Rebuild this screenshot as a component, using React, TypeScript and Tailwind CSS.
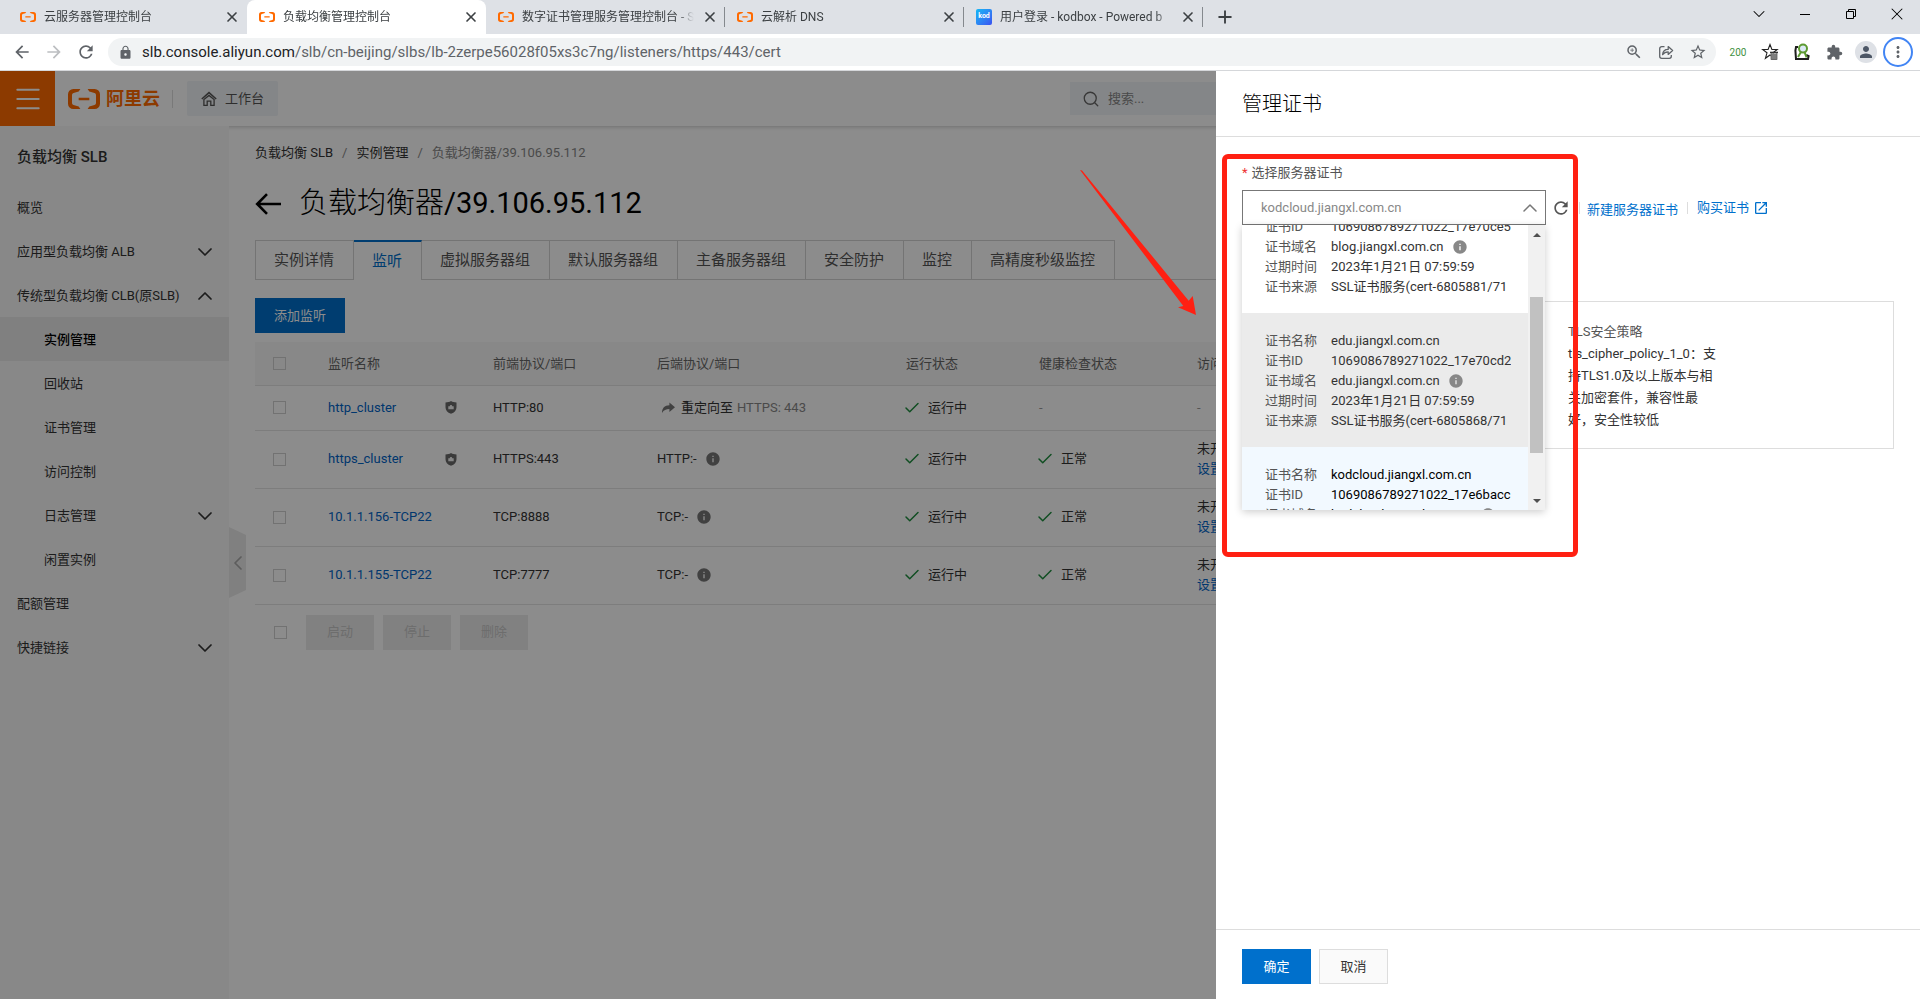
import React from "react";
import {
  ChevronDown,
  ChevronLeft,
  ChevronUp,
  Check,
  Menu,
  Plus,
  Search,
  X,
} from "lucide-react";
import {
  MdArrowBack,
  MdArrowForward,
  MdExtension,
  MdInfo,
  MdLock,
  MdMoreVert,
  MdOpenInNew,
  MdPerson,
  MdRefresh,
  MdStarBorder,
  MdZoomIn,
} from "react-icons/md";
import { SiAlibabacloud } from "react-icons/si";

interface BrowserTab {
  title: string;
  active?: boolean;
  kod?: boolean;
  divider?: boolean;
}

const browserTabs: BrowserTab[] = [
  { title: "云服务器管理控制台" },
  { title: "负载均衡管理控制台", active: true },
  { title: "数字证书管理服务管理控制台 - S", divider: true },
  { title: "云解析 DNS", divider: true },
  { title: "用户登录 - kodbox - Powered b", kod: true, divider: true },
];

interface NavItem {
  label: string;
  sub?: boolean;
  active?: boolean;
  arrow?: "up" | "down";
}

const navItems: NavItem[] = [
  { label: "概览" },
  { label: "应用型负载均衡 ALB", arrow: "down" },
  { label: "传统型负载均衡 CLB(原SLB)", arrow: "up" },
  { label: "实例管理", sub: true, active: true },
  { label: "回收站", sub: true },
  { label: "证书管理", sub: true },
  { label: "访问控制", sub: true },
  { label: "日志管理", sub: true, arrow: "down" },
  { label: "闲置实例", sub: true },
  { label: "配额管理" },
  { label: "快捷链接", arrow: "down" },
];

const detailTabs = [
  "实例详情",
  "监听",
  "虚拟服务器组",
  "默认服务器组",
  "主备服务器组",
  "安全防护",
  "监控",
  "高精度秒级监控",
];

interface Listener {
  name: string;
  shield?: boolean;
  front: string;
  back: string;
  redirect?: boolean;
}

const listeners: Listener[] = [
  { name: "http_cluster", shield: true, front: "HTTP:80", back: "HTTPS: 443", redirect: true },
  { name: "https_cluster", shield: true, front: "HTTPS:443", back: "HTTP:-" },
  { name: "10.1.1.156-TCP22", front: "TCP:8888", back: "TCP:-" },
  { name: "10.1.1.155-TCP22", front: "TCP:7777", back: "TCP:-" },
];

interface Cert {
  name: string;
  id: string;
  source: string;
  bg: string;
}

const certs: Cert[] = [
  { name: "blog.jiangxl.com.cn", id: "1069086789271022_17e70ce5", source: "SSL证书服务(cert-6805881/71", bg: "bg-white text-[#333]" },
  { name: "edu.jiangxl.com.cn", id: "1069086789271022_17e70cd2", source: "SSL证书服务(cert-6805868/71", bg: "bg-[#ebebeb] text-[#333]" },
  { name: "kodcloud.jiangxl.com.cn", id: "1069086789271022_17e6bacc", source: "SSL证书服务(cert-6800712/71", bg: "bg-[#f2f9ff] text-black" },
];

function KodIcon() {
  return (
    <span className="flex size-4 shrink-0 items-center justify-center rounded-xs bg-linear-to-br from-[#12b8f5] to-[#3a4ff0] text-[7px] font-bold text-white">
      kod
    </span>
  );
}

function ShareIcon() {
  return (
    <svg width="16" height="16" viewBox="0 0 16 16" fill="none" stroke="#5f6368" strokeWidth="1.3">
      <path d="M6.5 2.7H3.7a2 2 0 0 0-2 2v7.6a2 2 0 0 0 2 2h7.6a2 2 0 0 0 2-2V11" />
      <path d="M4.6 10.6c.3-3.6 2.4-5.2 5.6-5.2V2.6L14.6 6.6l-4.4 3.8V7.8c-2.6 0-4.2.8-5.6 2.8z" strokeLinejoin="round" />
    </svg>
  );
}

function StarTrashIcon() {
  return (
    <svg width="18" height="18" viewBox="0 0 18 18">
      <path d="M9 1.5l1.9 5h5.3l-4.2 3.3 1.5 5.2L9 12l-4.6 3.3 1.6-5.5-4.3-3.3h5.4z" fill="none" stroke="#222" strokeWidth="1.1" />
      <path d="M9.7 10.3h6.6v6.5H9.7z" fill="#999" />
      <path d="M9 9.4h8" stroke="#333" strokeWidth="1.4" />
      <path d="M10.2 10v6.5h5.6V10M12 11v5M14 11v5" fill="none" stroke="#555" strokeWidth="0.8" />
    </svg>
  );
}

function LensIcon() {
  return (
    <svg width="18" height="18" viewBox="0 0 18 18" fill="none">
      <path d="M5 4H3l-.6 3.5L3 16h12l.6-3-2.4-1" stroke="#1d1d1d" strokeWidth="2" />
      <circle cx="10" cy="5.6" r="4" fill="#dbe9f5" stroke="#5d9a32" strokeWidth="2" />
      <path d="M8 9l-3 5M11.6 9.4l2 5" stroke="#5d9a32" strokeWidth="2" />
    </svg>
  );
}

function ShieldIcon() {
  return (
    <svg width="12" height="13" viewBox="0 0 12 13">
      <path d="M6 0c1.6 1 3.4 1.4 5.5 1.4v4.8c0 3-1.9 5.2-5.5 6.6C2.4 11.4.5 9.2.5 6.2V1.4C2.6 1.4 4.4 1 6 0z" fill="#6b6b6b" />
      <path d="M3.3 5.2h1.5c0-1.6 2.4-1.6 2.4 0h1.5v3H3.3z" fill="#f4f4f4" />
    </svg>
  );
}

function HomeIcon() {
  return (
    <svg width="16" height="16" viewBox="0 0 16 16" fill="none" stroke="currentColor" strokeWidth="1.5">
      <path d="M.8 8L8 1.6 15.2 8" />
      <path d="M2.9 8.6v5.8h3.3v-4.2h3.6v4.2h3.3V8.6L8 4.4z" strokeWidth="1.3" />
    </svg>
  );
}

function BackArrow() {
  return (
    <svg width="26" height="22" viewBox="0 0 26 22" fill="none" stroke="currentColor" strokeWidth="2.6">
      <path d="M26 11H2.5M12 1.2L2.2 11 12 20.8" />
    </svg>
  );
}

function RedirectIcon() {
  return (
    <svg width="13" height="11" viewBox="0 0 13 11">
      <path d="M0 11c0-4.8 2.5-7.6 7.4-7.7V.4L13 5.2 7.4 10V7C4 7 1.8 8 0 11z" fill="#777" />
    </svg>
  );
}

function BrowserChrome() {
  return (
    <div className="shrink-0 border-b border-[#d5d7da] bg-white">
      <div className="flex h-[34px] bg-[#dee1e6] pl-2 text-xs text-[#3c4043]">
        {browserTabs.map((tab) => (
          <div
            key={tab.title}
            className={`flex w-[239px] items-center gap-2 pl-3 ${tab.active ? "rounded-t-lg bg-white" : ""} ${tab.divider ? "" : "pr-[7px]"}`}
          >
            {tab.kod ? <KodIcon /> : <SiAlibabacloud size={16} color="#ff6a00" className="shrink-0" />}
            <span className="min-w-0 flex-1 overflow-hidden mask-r-from-90% whitespace-nowrap">{tab.title}</span>
            <button aria-label="关闭标签页" className="flex shrink-0">
              <X size={16} strokeWidth={2.5} />
            </button>
            {tab.divider && <span className="-ml-0.5 h-5 w-px bg-[#85898e]" />}
          </div>
        ))}
        <button aria-label="新标签页" className="ml-3 flex items-center">
          <Plus size={20} strokeWidth={2.25} />
        </button>
        <div className="mb-1.5 ml-auto flex text-black">
          <button aria-label="搜索标签页" className="flex w-[46px] items-center justify-center">
            <ChevronDown size={20} strokeWidth={1.25} />
          </button>
          <button aria-label="最小化" className="flex w-[46px] items-center justify-center">
            <span className="h-px w-2.5 bg-black" />
          </button>
          <button aria-label="还原" className="flex w-[46px] items-center justify-center">
            <svg width="10" height="10" viewBox="0 0 10 10" fill="none" stroke="#000">
              <path d="M.5 2.5h7v7h-7zM2.5 2.5v-2h7v7h-2" />
            </svg>
          </button>
          <button aria-label="关闭" className="flex w-[46px] items-center justify-center">
            <X size={20} strokeWidth={1.25} />
          </button>
        </div>
      </div>
      <div className="flex h-9 items-center px-1.5 text-[#5f6368]">
        <button aria-label="后退" className="flex w-8 justify-center"><MdArrowBack size={20} /></button>
        <button aria-label="前进" className="flex w-8 justify-center text-[#bcbec1]"><MdArrowForward size={20} /></button>
        <button aria-label="重新加载" className="flex w-8 justify-center"><MdRefresh size={20} /></button>
        <div className="ml-1.5 flex h-7 flex-1 items-center rounded-full bg-[#f1f3f4] pr-0.5 pl-2.5">
          <MdLock size={15} />
          <p className="ml-[9px] flex-1 text-[15px] leading-5">
            <span className="text-[#202124]">slb.console.aliyun.com</span>/slb/cn-beijing/slbs/lb-2zerpe56028f05xs3c7ng/listeners/https/443/cert
          </p>
          <button aria-label="缩放" className="flex w-8 justify-center"><MdZoomIn size={18} /></button>
          <button aria-label="分享" className="flex w-8 justify-center"><ShareIcon /></button>
          <button aria-label="收藏" className="flex w-8 justify-center"><MdStarBorder size={18} /></button>
        </div>
        <div className="ml-1.5 flex items-center">
          <span className="w-8 text-center text-[10px] text-[#3f9142]">200</span>
          <button aria-label="书签清理" className="flex w-8 justify-center"><StarTrashIcon /></button>
          <button aria-label="检查" className="flex w-8 justify-center"><LensIcon /></button>
          <button aria-label="扩展程序" className="flex w-8 justify-center"><MdExtension size={17} /></button>
          <button aria-label="用户" className="flex w-8 justify-center">
            <span className="flex size-[22px] items-center justify-center rounded-full bg-[#dee1e6] text-[#4d5766]"><MdPerson size={18} /></span>
          </button>
          <button aria-label="菜单" className="flex w-8 justify-center">
            <span className="flex size-[30px] shrink-0 items-center justify-center rounded-full border-2 border-[#4285f4]"><MdMoreVert size={18} /></span>
          </button>
        </div>
      </div>
    </div>
  );
}

function TopBar() {
  return (
    <header className="relative flex h-[55px] shrink-0 items-center bg-white shadow-[0_1px_4px_rgba(0,0,0,0.2)]">
      <button aria-label="产品与服务" className="flex h-full w-[55px] items-center justify-center bg-[#ff6a00] text-white">
        <Menu size={32} strokeWidth={1.5} />
      </button>
      <a href="#home" className="ml-[13px] flex items-center gap-1.5 text-lg font-bold text-[#ff6a00]">
        <SiAlibabacloud size={32} />
        阿里云
      </a>
      <span className="ml-3 h-[18px] w-px bg-[#ddd]" />
      <a href="#workbench" className="ml-3.5 flex h-[35px] w-[91px] items-center gap-2 rounded-xs bg-[#f1f4f7] pl-3.5 text-[13px] text-[#555]">
        <HomeIcon />
        工作台
      </a>
      <label className="mr-[350px] ml-auto flex h-[33px] w-[500px] items-center gap-2 bg-[#f1f4f7] pl-3 text-[#666]">
        <Search size={18} strokeWidth={1.75} />
        <input type="text" placeholder="搜索..." aria-label="搜索" className="flex-1 bg-transparent text-[13px] outline-none placeholder:text-[#888]" />
      </label>
    </header>
  );
}

function Sidebar() {
  return (
    <nav className="relative w-[229px] shrink-0 bg-[#f7f7f7] pt-1 text-[13px] text-[#333]">
      <h2 className="flex h-[55px] items-center pl-[17px] text-[15px] font-medium">负载均衡 SLB</h2>
      {navItems.map((item) => (
        <a
          key={item.label}
          href={`#${item.label}`}
          className={`flex h-11 items-center justify-between pt-px pr-3 ${item.sub ? "pl-11" : "pl-[17px]"} ${item.active ? "bg-[#e9e9e9] font-medium text-black" : ""}`}
        >
          {item.label}
          {item.arrow === "down" && <ChevronDown size={24} strokeWidth={1.75} />}
          {item.arrow === "up" && <ChevronUp size={24} strokeWidth={1.75} />}
        </a>
      ))}
      <button aria-label="收起" className="absolute top-[401px] left-full flex h-[71px] w-[17px] items-center justify-center bg-[#e9e9e9] text-[#aaa] [clip-path:polygon(0_0,100%_8px,100%_63px,0_100%)]">
        <ChevronLeft size={24} strokeWidth={1.75} className="shrink-0" />
      </button>
    </nav>
  );
}

function Status({ children }: { children: React.ReactNode }) {
  return (
    <span className="flex items-center gap-[7px]">
      <Check size={18} strokeWidth={2} className="-ml-[3px] text-[#1e8e3e]" />
      {children}
    </span>
  );
}

function CheckBox({ label }: { label: string }) {
  return (
    <input type="checkbox" aria-label={label} className="block size-[13px] appearance-none border border-[#d0d0d0]" />
  );
}

function ListenerTable() {
  return (
    <table className="mt-[9px] w-full table-fixed text-left text-[13px] text-[#333]">
      <colgroup>
        <col className="w-[73px]" />
        <col className="w-[165px]" />
        <col className="w-[164px]" />
        <col className="w-[249px]" />
        <col className="w-[133px]" />
        <col className="w-[158px]" />
        <col />
      </colgroup>
      <thead>
        <tr className="h-[43px] border-b border-[#e3e3e3] bg-[#f8f8f8] text-[#666]">
          <th className="pl-[18px]"><CheckBox label="全选" /></th>
          <th className="font-normal">监听名称</th>
          <th className="font-normal">前端协议/端口</th>
          <th className="font-normal">后端协议/端口</th>
          <th className="font-normal">运行状态</th>
          <th className="font-normal">健康检查状态</th>
          <th className="font-normal">访问控制</th>
        </tr>
      </thead>
      <tbody>
        {listeners.map((row) => (
          <tr key={row.name} className={`border-b border-[#e3e3e3] ${row.redirect ? "h-[45px]" : "h-[58px]"}`}>
            <td className="pl-[18px]"><CheckBox label={row.name} /></td>
            <td>
              <span className="flex items-center justify-between pr-9">
                <a href={`#${row.name}`} className="text-[#0064c8]">{row.name}</a>
                {row.shield && <ShieldIcon />}
              </span>
            </td>
            <td>{row.front}</td>
            <td>
              {row.redirect ? (
                <span className="flex items-center gap-1 pl-[5px]">
                  <RedirectIcon />
                  <span className="ml-0.5">重定向至</span>
                  <span className="text-[#888]">{row.back}</span>
                </span>
              ) : (
                <span className="flex items-center gap-2">
                  {row.back}
                  <MdInfo size={16} className="text-[#777]" />
                </span>
              )}
            </td>
            <td><Status>运行中</Status></td>
            <td>{row.redirect ? <span className="text-[#999]">-</span> : <Status>正常</Status>}</td>
            <td className="leading-5">
              {row.redirect ? (
                <span className="text-[#999]">-</span>
              ) : (
                <>
                  <p>未开启</p>
                  <a href="#acl" className="text-[#0064c8]">设置</a>
                </>
              )}
            </td>
          </tr>
        ))}
      </tbody>
    </table>
  );
}

function MainContent() {
  return (
    <main className="min-w-0 flex-1 pt-[17px] pl-[26px]">
      <div className="flex gap-[9px] text-[13px] leading-5 text-[#333]">
        <a href="#slb">负载均衡 SLB</a>
        <span className="text-[#888]">/</span>
        <a href="#instances">实例管理</a>
        <span className="text-[#888]">/</span>
        <span className="text-[#888]">负载均衡器/39.106.95.112</span>
      </div>
      <h1 className="mt-[18px] flex h-[46px] items-center gap-[18px] text-[29px] text-black">
        <a href="#back" aria-label="返回"><BackArrow /></a>
        <span><span className="font-light">负载均衡器</span>/39.106.95.112</span>
      </h1>
      <div className="mt-[13px] flex text-[15px] text-[#555]">
        {detailTabs.map((tab, i) => (
          <button
            key={tab}
            className={`h-10 border-r border-[#d3d3d3] pr-[19px] pl-[18px] ${i === 0 ? "border-l" : ""} ${
              tab === "监听" ? "border-t-2 border-t-[#0070cc] text-[#0070cc]" : "border-y"
            }`}
          >
            {tab}
          </button>
        ))}
        <span className="flex-1 border-b border-[#d3d3d3]" />
      </div>
      <button className="mt-[18px] h-[35px] w-[90px] bg-[#0070cc] text-[13px] text-white">添加监听</button>
      <ListenerTable />
      <div className="mt-2.5 flex items-center gap-[9px] pl-[19px] text-[13px]">
        <CheckBox label="选择全部监听" />
        {["启动", "停止", "删除"].map((action) => (
          <button key={action} disabled className="h-[35px] w-[68px] bg-[#ececec] text-[#c6c6c6] first-of-type:ml-2.5">
            {action}
          </button>
        ))}
      </div>
    </main>
  );
}

function CertOption({ cert }: { cert: Cert }) {
  const rows = [
    ["证书名称", cert.name],
    ["证书ID", cert.id],
    ["证书域名", cert.name],
    ["过期时间", "2023年1月21日 07:59:59"],
    ["证书来源", cert.source],
  ];
  return (
    <li role="option" aria-selected={cert.name.startsWith("kod")} className={`pt-[18px] pb-4 pl-[23px] ${cert.bg}`}>
      {rows.map(([label, value]) => (
        <div key={label} className="flex h-5 items-center leading-5">
          <span className="w-[66px] shrink-0 text-[#555]">{label}</span>
          <span className="max-w-[182px] overflow-hidden whitespace-nowrap">{value}</span>
          {label === "证书域名" && <MdInfo size={16} className="ml-2 text-[#888]" />}
        </div>
      ))}
    </li>
  );
}

function CertSelect() {
  return (
    <div className="relative w-[304px]">
      <select id="cert" className="block h-[35px] w-full appearance-none border border-[#777] bg-white pl-[18px] text-[13px] text-[#888] outline-none">
        <option>kodcloud.jiangxl.com.cn</option>
      </select>
      <ChevronUp size={24} strokeWidth={1.5} className="pointer-events-none absolute top-1.5 right-1 text-[#777]" />
      <div className="absolute top-full left-0 z-10 flex h-[285px] w-[303px] overflow-hidden bg-white text-[13px] shadow-[0_2px_8px_rgba(0,0,0,0.2)]">
        <ul role="listbox" aria-label="服务器证书" className="-mt-[46px] flex-1">
          {certs.map((cert) => <CertOption key={cert.name} cert={cert} />)}
        </ul>
        <div className="flex w-[17px] flex-col items-center bg-[#f1f1f1] text-[#505050]">
          <svg width="8" height="4" viewBox="0 0 8 4" className="mt-2 fill-current"><path d="M0 4l4-4 4 4z" /></svg>
          <div className="mt-15 h-[156px] w-[13px] bg-[#c1c1c1]" />
          <svg width="8" height="4" viewBox="0 0 8 4" className="mt-auto mb-[7px] fill-current"><path d="M0 0l4 4 4-4z" /></svg>
        </div>
      </div>
    </div>
  );
}

function CertDrawer() {
  return (
    <section className="absolute inset-y-0 right-0 flex w-[704px] flex-col bg-white">
      <h2 className="flex h-[66px] items-center border-b border-[#ddd] pl-[26px] text-xl font-light text-black">管理证书</h2>
      <div className="flex-1 px-[26px] pt-[26px] text-[13px] text-[#333]">
        <label htmlFor="cert" className="block leading-5 text-[#555]">
          <span className="mr-1 text-[#e33]">*</span>选择服务器证书
        </label>
        <div className="mt-[7px] flex items-center">
          <CertSelect />
          <button aria-label="刷新" className="ml-[5px] text-[#555]"><MdRefresh size={20} /></button>
          <span className="ml-2 h-3 w-px bg-[#ddd]" />
          <a href="#new" className="mt-1 ml-[7px] text-[#0070cc]">新建服务器证书</a>
          <span className="mx-[9px] h-3 w-px bg-[#ddd]" />
          <a href="#buy" className="flex items-center gap-1 text-[#0070cc]">购买证书 <MdOpenInNew size={16} /></a>
        </div>
        <div className="mt-[76px] grid grid-cols-2 border border-[#ddd] pt-[19px] pb-[17px] leading-[22px]">
          <dl className="col-start-2 whitespace-nowrap">
            <dt className="text-[#555]">TLS安全策略</dt>
            <dd>tls_cipher_policy_1_0：支<br />持TLS1.0及以上版本与相<br />关加密套件，兼容性最<br />好，安全性较低</dd>
          </dl>
        </div>
      </div>
      <div className="flex h-[70px] gap-2 border-t border-[#ddd] pt-[19px] pl-[26px] text-[13px]">
        <button className="h-[35px] w-[69px] bg-[#0070cc] text-white">确定</button>
        <button className="h-[35px] w-[69px] border border-[#ddd] bg-[#fafafa] text-[#333]">取消</button>
      </div>
      <div className="pointer-events-none absolute top-[83px] left-1.5 z-20 h-[403px] w-[356px] rounded-md border-[5px] border-[#ff2012]" />
      <svg width="116" height="145" viewBox="0 0 116 145" className="pointer-events-none absolute top-[99px] -left-[136px]">
        <path d="M0 0l2 .5L108.7 130.7l4-4.7L116 145l-18-7.7 5.3-1.3z" fill="#ff2012" />
      </svg>
    </section>
  );
}

export default function App() {
  return (
    <div className="flex h-screen flex-col overflow-hidden font-[Roboto,'Noto_Sans_CJK_SC',sans-serif]">
      <BrowserChrome />
      <div className="relative flex min-h-0 flex-1 flex-col overflow-hidden bg-white">
        <TopBar />
        <div className="flex min-h-0 flex-1">
          <Sidebar />
          <MainContent />
        </div>
        <div className="absolute inset-0 bg-black/45" />
        <CertDrawer />
      </div>
    </div>
  );
}
